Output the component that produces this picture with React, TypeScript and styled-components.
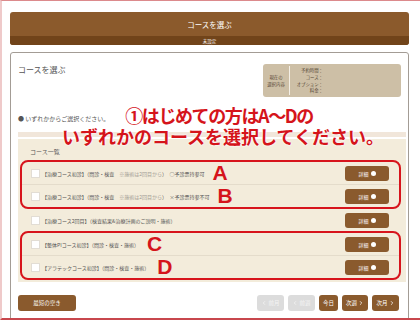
import * as React from 'react';
import styled, { createGlobalStyle } from 'styled-components';
import { ChevronLeft, ChevronRight } from 'lucide-react';

const GlobalStyle = createGlobalStyle`
  html, body {
    margin: 0;
    padding: 0;
    background: #ffffff;
  }
  body {
    font-family: "Noto Sans CJK JP", "Noto Sans", sans-serif;
    color: #555555;
  }
`;

const Frame = styled.div`
  width: 420px;
  height: 320px;
  box-sizing: border-box;
  border-top: 1px solid #dc8a8c;
  border-left: 2px solid #efcaca;
  border-bottom: 2px solid #c8474d;
  padding: 11px 11px 0 8px;
  overflow: hidden;
  background: #ffffff;
`;

const Header = styled.div`
  border-radius: 3px;
  overflow: hidden;
  background: #8b5a2c;
  color: #ffffff;
`;

const HeaderTitle = styled.div`
  height: 24px;
  display: flex;
  align-items: center;
  justify-content: center;
  font-size: 7.5px;
`;

const HeaderSub = styled.div`
  height: 9px;
  display: flex;
  align-items: center;
  justify-content: center;
  font-size: 4.5px;
  background: #71441a;
`;

const Panel = styled.div`
  position: relative;
  margin-top: 7px;
  border: 1px solid #a39c95;
  border-radius: 3px;
  padding: 11px 7px 20px 7px;
`;

const PanelTop = styled.div`
  display: flex;
  justify-content: space-between;
  align-items: flex-start;
`;

const PanelTitle = styled.div`
  font-size: 8px;
  line-height: 10px;
  margin-top: 1px;
  color: #555555;
`;

const InfoBox = styled.div`
  width: 138px;
  height: 33px;
  box-sizing: border-box;
  background: #cdbfa6;
  border-radius: 3px;
  display: flex;
  align-items: stretch;
  padding: 2px 0;
  font-size: 4.4px;
  color: #5a4a38;
`;

const InfoLabel = styled.div`
  width: 26px;
  display: flex;
  flex-direction: column;
  justify-content: center;
  align-items: center;
  line-height: 6.5px;
  border-right: 1px solid #f4efe6;
`;

const InfoKeys = styled.div`
  width: 33px;
  display: flex;
  flex-direction: column;
  justify-content: center;
  align-items: flex-end;
  line-height: 6.6px;
`;

const Lead = styled.div`
  margin-top: 18px;
  font-size: 6px;
  line-height: 8px;
  color: #555555;
`;

const Annotation = styled.div`
  position: absolute;
  left: 44px;
  top: 51px;
  width: 336px;
  display: flex;
  flex-direction: column;
  align-items: center;
  font-family: "Noto Sans CJK JP", sans-serif;
  font-weight: 700;
  font-size: 18px;
  line-height: 22px;
  color: #d5141b;
  text-shadow: 0 0 2px #ffffff, 0 0 2px #ffffff;
  z-index: 2;
`;

const AnnotationLine = styled.span<{ $tight?: boolean }>`
  height: 21px;
  display: block;
  white-space: nowrap;
  letter-spacing: ${(p: { $tight?: boolean }) => (p.$tight ? '-1.4px' : '0')};
  padding-right: ${(p: { $tight?: boolean }) => (p.$tight ? '8px' : '0')};
`;

const CourseList = styled.div`
  margin-top: 9px;
  margin-right: -5px;
`;

const ListCap = styled.div`
  height: 5px;
  background: #f1e6da;
  margin-bottom: 2px;
`;

const ListBody = styled.div`
  background: #f3ecdb;
  padding: 9px 5px 2px 2px;
`;

const ListLabel = styled.div`
  font-size: 6px;
  line-height: 8px;
  padding-left: 10px;
  margin-bottom: 4px;
  color: #555555;
`;

interface GroupProps {
  $marked?: boolean;
}

const Group = styled.div<GroupProps>`
  border: ${(p: GroupProps) => (p.$marked ? '2px solid #d7141c' : 'none')};
  border-radius: 8px;
  padding: ${(p: GroupProps) => (p.$marked ? '0' : '0 2px')};
`;

const Row = styled.div`
  height: 22px;
  display: flex;
  align-items: center;
  padding: 0 10px 0 9px;
  & + & {
    border-top: 1px solid #e4dccb;
  }
`;

const Check = styled.span`
  width: 9px;
  height: 9px;
  box-sizing: border-box;
  background: #ffffff;
  border: 1px solid #e2ddd4;
  flex: none;
`;

const RowText = styled.div`
  flex: 1;
  display: flex;
  align-items: center;
  font-size: 5px;
  color: #555555;
  white-space: pre;
  margin-left: 2px;
`;

const Note = styled.span`
  color: #a09a92;
`;

const Letter = styled.span`
  font-family: "Liberation Sans", Arial, sans-serif;
  font-weight: 700;
  font-size: 21px;
  line-height: 20px;
  color: #d5141b;
  margin-left: 8px;
`;

const DetailButton = styled.div`
  width: 44px;
  height: 15px;
  border-radius: 3px;
  background: #8a5a2d;
  color: #ffffff;
  font-size: 5px;
  display: flex;
  align-items: center;
  justify-content: center;
  gap: 2px;
  flex: none;
`;

const Dot = styled.span`
  width: 5px;
  height: 5px;
  border-radius: 50%;
  background: #ffffff;
`;

const Footer = styled.div`
  margin-top: 13px;
  display: flex;
  justify-content: space-between;
  padding-right: 2px;
`;

const Pager = styled.div`
  display: flex;
  gap: 4px;
`;

interface NavButtonProps {
  $w: number;
  $off?: boolean;
}

const NavButton = styled.div<NavButtonProps>`
  width: ${(p: NavButtonProps) => p.$w}px;
  height: 16px;
  border-radius: 3px;
  background: ${(p: NavButtonProps) => (p.$off ? '#dcdcdc' : '#8a5a2d')};
  color: ${(p: NavButtonProps) => (p.$off ? '#f4f4f4' : '#ffffff')};
  font-size: 5.5px;
  display: flex;
  align-items: center;
  justify-content: center;
  gap: 1px;
`;

const courses = [
  { group: 1, text: '【治療コース初診】（問診・検査　', note: '※施術は2回目から', tail: '）　○予診票持参可', letter: 'A' },
  { group: 1, text: '【治療コース初診】（問診・検査　', note: '※施術は2回目から', tail: '）　×予診票持参不可', letter: 'B' },
  { group: 2, text: '【治療コース2回目】（検査結果&治療計画のご説明・施術）', note: '', tail: '', letter: '' },
  { group: 3, text: '【整体PIコース初診】（問診・検査・施術）', note: '', tail: '', letter: 'C' },
  { group: 3, text: '【アラテックコース初診】（問診・検査・施術）', note: '', tail: '', letter: 'D' },
];

const CourseRow = ({ c }: { c: typeof courses[number] }) => (
  <Row>
    <Check />
    <RowText>
      {c.text}
      {c.note && <Note>{c.note}</Note>}
      {c.tail}
      {c.letter && <Letter>{c.letter}</Letter>}
    </RowText>
    <DetailButton>
      詳細 <Dot />
    </DetailButton>
  </Row>
);

export default class App extends React.Component {
  render() {
    return (
      <Frame>
        <GlobalStyle />
        <Header>
          <HeaderTitle>コースを選ぶ</HeaderTitle>
          <HeaderSub>未設定</HeaderSub>
        </Header>
        <Panel>
          <PanelTop>
            <PanelTitle>コースを選ぶ</PanelTitle>
            <InfoBox>
              <InfoLabel>
                <span>現在の</span>
                <span>選択内容</span>
              </InfoLabel>
              <InfoKeys>
                <span>予約時間：</span>
                <span>コース：</span>
                <span>オプション：</span>
                <span>料金：</span>
              </InfoKeys>
            </InfoBox>
          </PanelTop>
          <Lead>● いずれかからご選択ください。</Lead>
          <Annotation>
            <AnnotationLine $tight>①はじめての方はA～Dの</AnnotationLine>
            <AnnotationLine>いずれかのコースを選択してください。</AnnotationLine>
          </Annotation>
          <CourseList>
            <ListCap />
            <ListBody>
              <ListLabel>コース一覧</ListLabel>
              <Group $marked>
                {courses.filter(c => c.group === 1).map((c, i) => <CourseRow key={i} c={c} />)}
              </Group>
              <Group>
                {courses.filter(c => c.group === 2).map((c, i) => <CourseRow key={i} c={c} />)}
              </Group>
              <Group $marked>
                {courses.filter(c => c.group === 3).map((c, i) => <CourseRow key={i} c={c} />)}
              </Group>
            </ListBody>
          </CourseList>
          <Footer>
            <NavButton $w={58}>最短の空き</NavButton>
            <Pager>
              <NavButton $w={27} $off><ChevronLeft size={6} strokeWidth={3} />前月</NavButton>
              <NavButton $w={27} $off><ChevronLeft size={6} strokeWidth={3} />前週</NavButton>
              <NavButton $w={19}>今日</NavButton>
              <NavButton $w={26}>次週<ChevronRight size={6} strokeWidth={3} /></NavButton>
              <NavButton $w={27}>次月<ChevronRight size={6} strokeWidth={3} /></NavButton>
            </Pager>
          </Footer>
        </Panel>
      </Frame>
    );
  }
}
